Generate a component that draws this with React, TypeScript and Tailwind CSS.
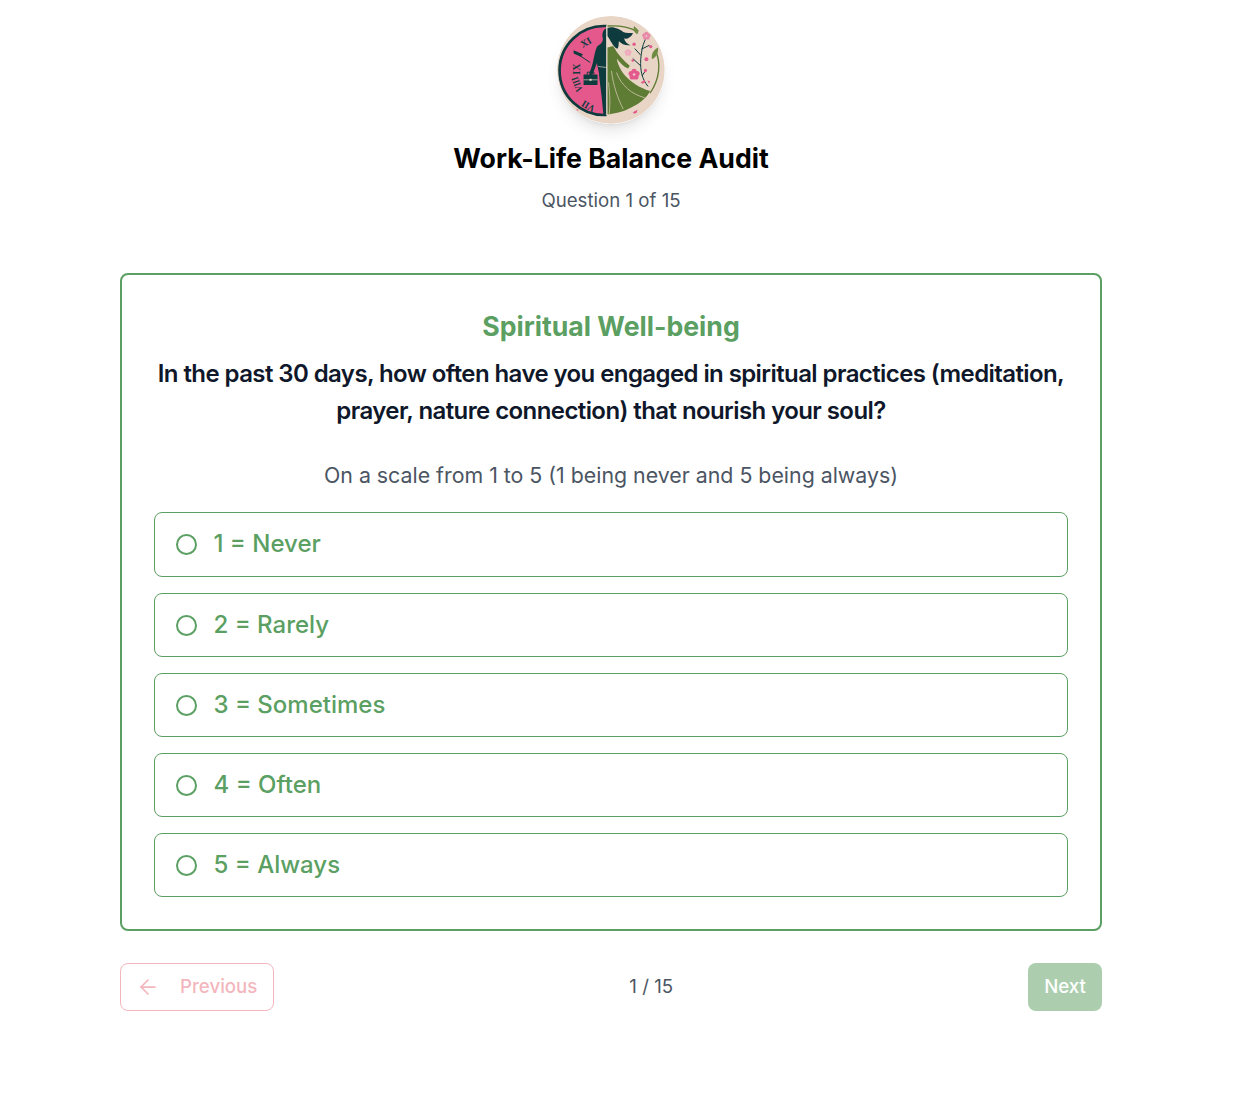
import { ArrowLeft } from 'lucide-react';

const options = ['1 = Never', '2 = Rarely', '3 = Sometimes', '4 = Often', '5 = Always'];

const dark = '#0e3b3d';
const olive = '#5f7c34';
const beige = '#e8d5c6';

function Petals({ x, y, r, fill }: { x: number; y: number; r: number; fill: string }) {
  return (
    <g fill={fill}>
      {[0, 72, 144, 216, 288].map((a) => (
        <circle
          key={a}
          cx={x + Math.sin((a * Math.PI) / 180) * r * 1.15}
          cy={y - Math.cos((a * Math.PI) / 180) * r * 1.15}
          r={r}
        />
      ))}
      <circle cx={x} cy={y} r={r * 0.5} fill="#f3c3cf" />
    </g>
  );
}

function Logo() {
  return (
    <svg viewBox="50 33 325 325" className="h-[108px] w-[108px] rounded-full shadow-lg">
      <circle cx="212" cy="195" r="162" fill={beige} />
      <path d="M199 63.2A134 134 0 1 0 199 330.8Z" fill="#e4588c" />
      <path d="M199 63.2A134 134 0 1 0 199 330.8" fill="none" stroke={dark} strokeWidth="8" />

      {/* clock and figure, left half */}
      <g transform="translate(50 33)">
        <g fontFamily="'Liberation Serif', serif" fontWeight="700" fontSize="30" fill={dark} textAnchor="middle">
          <text transform="translate(92 88) rotate(-30)">XI</text>
          <text transform="translate(60 160) rotate(-90)" dy="8">IX</text>
          <text transform="translate(62 205) rotate(-110) scale(0.8 1)" dy="8">VIII</text>
          <text transform="translate(95 270) rotate(-150) scale(0.9 1)" dy="8">VII</text>
        </g>
        <path d="M52 108l48 32" stroke={dark} strokeWidth="3" />
        <path d="M50 103l28 12-6 8-22-10Z" fill={dark} />
        <path
          d="M150 36C138 40 134 55 138 68 139 78 132 85 122 90 116 98 112 120 108 140 104 155 100 165 96 176L106 178 120 142 126 170 128 192 134 240 140 300H150Z"
          fill={dark}
        />
        <path d="M124 152l26 3" stroke={beige} strokeWidth="2" />
        <rect x="80" y="176" width="42" height="32" rx="2" fill={dark} />
        <path d="M91 176v-7h20v7" fill="none" stroke={dark} strokeWidth="3" />
        <path d="M80 192h42" stroke={beige} strokeWidth="2" />
        <rect x="98" y="189" width="6" height="6" fill={beige} />
      </g>
      <rect x="198" y="62" width="3" height="270" fill="#e8e0d4" />

      {/* dress and tree, right half */}
      <g transform="translate(194 33)">
        <path d="M8 30C40 28 70 32 92 44M152 104C170 140 165 190 136 232" fill="none" stroke={olive} strokeWidth="4" />
        <path
          d="M8 95L25 90C32 100 40 120 75 150L70 158C55 152 45 140 36 128 40 160 70 205 136 226 125 250 95 270 70 280 50 290 25 295 8 296Z"
          fill={olive}
        />
        <path
          d="M20 165C25 210 40 250 55 280M35 170C50 210 80 235 120 246M11 200C16 240 16 270 13 295"
          fill="none"
          stroke={beige}
          strokeWidth="2"
        />
        <path
          d="M8 36C25 30 45 40 55 48 65 52 75 50 85 52 78 65 68 70 58 68 60 78 68 85 78 88 62 90 50 84 42 76 42 90 40 100 36 98 25 92 15 70 8 60Z"
          fill={dark}
        />
        <path d="M130 212C112 190 106 165 108 130 110 110 112 90 122 70M108 150L84 128M108 118L90 98M110 100L134 88M112 180L122 165" fill="none" stroke={dark} strokeWidth="3" />
        <path d="M88 30L102 44 98 55C88 50 84 40 88 30Z" fill="#6f8b42" />
        <path d="M160 95C162 110 155 125 142 130 138 115 147 102 160 95Z" fill="#6f8b42" />
        <Petals x={88} y={176} r={8} fill="#e35a8d" />
        <Petals x={125} y={60} r={6} fill="#e88aa8" />
        <Petals x={70} y={110} r={5} fill="#efa9bd" />
        <g fill="#e35a8d">
          <circle cx="88" cy="85" r="5" />
          <circle cx="138" cy="92" r="5" />
          <circle cx="84" cy="134" r="4" />
          <circle cx="125" cy="130" r="6" />
          <circle cx="122" cy="164" r="5" />
          <path d="M108 200l12-8 1 8-8 4Z" />
          <path d="M128 194l8 2-3 7Z" />
          <path d="M84 290l14-8-2 9-8 3Z" />
        </g>
      </g>
      <path d="M107 316l6-3 1 5Z" fill="#e35a8d" />
    </svg>
  );
}

export default function App() {
  return (
    <div className="h-[1102px] w-[1222px] bg-white px-[120px] pt-4 font-['Inter',sans-serif] text-[#020817]">
      <header className="flex flex-col items-center">
        <Logo />
        <h1 className="mt-4 text-[26.67px] leading-[36px] font-bold text-black">Work-Life Balance Audit</h1>
        <p className="mt-[11px] text-[18.67px] leading-7 text-[#4b5563]">Question 1 of 15</p>
      </header>

      <main className="mt-[58px] rounded-lg border-2 border-[#5b9f62] px-8 pt-[33px] pb-8">
        <h2 className="text-center text-[26.67px] leading-[36px] font-bold text-[#5b9f62]">Spiritual Well-being</h2>
        <p className="mt-[11px] text-center text-2xl leading-[37px] font-semibold tracking-[-0.587px] text-[#0f172a]">
          In the past 30 days, how often have you engaged in spiritual practices (meditation, prayer, nature connection) that nourish your soul?
        </p>
        <p className="mt-[30px] text-center text-[21.33px] leading-8 text-[#4b5563]">
          On a scale from 1 to 5 (1 being never and 5 being always)
        </p>
        <div className="mt-[21px] flex flex-col gap-4">
          {options.map((o) => (
            <button key={o} className="flex h-16 items-center gap-[16.5px] rounded-lg border border-[#5b9f62] px-[21px] text-left first:h-[65px] first:pb-[1px]">
              <span className="h-[21px] w-[21px] shrink-0 rounded-full border-2 border-[#5b9f62]" />
              <span className="text-2xl font-medium text-[#5b9f62]">{o}</span>
            </button>
          ))}
        </div>
      </main>

      <nav className="mt-8 flex items-center justify-between">
        <button className="flex h-12 items-center gap-5 rounded-lg border border-[#e8707c] pr-4 pl-[15px] text-[18.67px] font-medium text-[#e8707c] opacity-50">
          <ArrowLeft className="h-6 w-6" strokeWidth={1.75} />
          Previous
        </button>
        <span className="text-[18.67px] text-[#4b5563]">1 / 15</span>
        <button className="flex h-12 w-[74px] items-center justify-center rounded-lg bg-[#5b9f62] text-[18.67px] font-medium text-white opacity-50">
          Next
        </button>
      </nav>
    </div>
  );
}
